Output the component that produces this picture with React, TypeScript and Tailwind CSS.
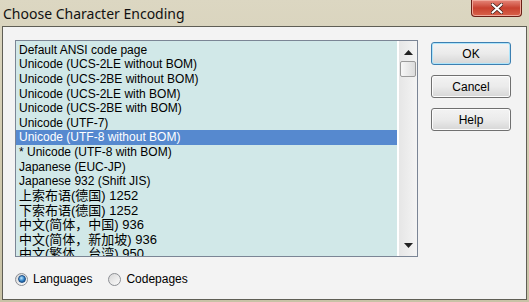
import * as React from "react"

const encodings = [
  "Default ANSI code page",
  "Unicode (UCS-2LE without BOM)",
  "Unicode (UCS-2BE without BOM)",
  "Unicode (UCS-2LE with BOM)",
  "Unicode (UCS-2BE with BOM)",
  "Unicode (UTF-7)",
  "Unicode (UTF-8 without BOM)",
  "* Unicode (UTF-8 with BOM)",
  "Japanese (EUC-JP)",
  "Japanese 932 (Shift JIS)",
  "上索布语(德国) 1252",
  "下索布语(德国) 1252",
  "中文(简体，中国) 936",
  "中文(简体，新加坡) 936",
  "中文(繁体，台湾) 950",
]

function Radio({ label, checked }: { label: string; checked?: boolean }) {
  return (
    <label className="flex items-center gap-[5px]">
      <span className="flex h-[13px] w-[13px] items-center justify-center rounded-full border border-[#8c8f94] bg-gradient-to-br from-[#d8d8d8] to-[#fbfbfb]">
        {checked && (
          <span className="h-[8px] w-[8px] rounded-full border border-[#1f4f86] bg-[radial-gradient(circle_at_40%_35%,#bfe8ff,#2d7fc5_55%,#123e73)]" />
        )}
      </span>
      <span>{label}</span>
    </label>
  )
}

function DialogButton({ label, primary }: { label: string; primary?: boolean }) {
  return (
    <button
      className={
        "h-[23px] w-[80px] rounded-[3px] border bg-gradient-to-b from-[#f3f3f3] via-[#ebebeb] to-[#d6d6d6] text-[12px] text-black " +
        (primary
          ? "border-[#3c7fb1] shadow-[inset_0_0_0_1px_#aee4fa]"
          : "border-[#707070] shadow-[inset_0_0_0_1px_#fcfcfc]")
      }
    >
      {label}
    </button>
  )
}

export default function App() {
  const [selected, setSelected] = React.useState(6)

  return (
    <div
      className="relative h-[302px] w-[529px] overflow-hidden bg-gradient-to-b from-[#dcd7c2] via-[#d2cbb0] to-[#c8c2a6] text-black"
      style={{ fontFamily: '"Liberation Sans", "Noto Sans CJK SC", sans-serif' }}
    >
      {/* title bar */}
      <div className="flex h-[26px] items-center pl-[3px] text-[14px] text-[#111]" style={{ fontFamily: '"Noto Sans", sans-serif' }}>
        Choose Character Encoding
      </div>
      <div className="absolute right-[7px] top-0 flex h-[17px] w-[51px] items-center justify-center rounded-b-[4px] border border-t-0 border-[#6b1f16] bg-gradient-to-b from-[#e5867a] via-[#c8402f] to-[#d8624a] shadow-[inset_0_0_0_1px_#f0a89b]">
        <svg width="12" height="11" viewBox="0 0 12 11">
          <path d="M1.5 1.5 L10.5 9.5 M10.5 1.5 L1.5 9.5" stroke="#3c1a14" strokeWidth="3.6" strokeLinecap="round" />
          <path d="M1.5 1.5 L10.5 9.5 M10.5 1.5 L1.5 9.5" stroke="#ffffff" strokeWidth="2.2" strokeLinecap="round" />
        </svg>
      </div>

      {/* client area */}
      <div className="mx-[2px] flex h-[274px] border border-[#5f5e55] bg-[#f3f3f3] pl-[12px] pt-[13px]">
        <div className="flex flex-col">
          <div className="flex h-[217px] w-[403px] border border-[#7b8595] bg-[#d1e8e8] text-[12px]">
            <div className="flex-1 overflow-hidden pt-[1.5px]">
              {encodings.map((enc, i) => (
                <div
                  key={enc}
                  onClick={() => setSelected(i)}
                  className={
                    "flex h-[14.6px] items-center whitespace-nowrap pl-[3px] " +
                    (i >= 10 ? "text-[13px] " : "") +
                    (i === selected ? "bg-[#5689cf] text-white" : "")
                  }
                >
                  {enc}
                </div>
              ))}
            </div>
            <div className="flex w-[20px] flex-col items-center border-l-2 border-white bg-gradient-to-r from-[#e6e6e6] to-[#f4f4f4]">
              <svg className="mt-[9px]" width="9" height="5" viewBox="0 0 9 5">
                <path d="M4.5 0 L9 5 L0 5 Z" fill="#222" />
              </svg>
              <div className="mt-[6px] h-[16px] w-[16px] rounded-[2px] border border-[#9a9a9a] bg-gradient-to-r from-[#f7f7f7] to-[#dcdcdc]" />
              <div className="flex-1" />
              <svg className="mb-[8px]" width="9" height="5" viewBox="0 0 9 5">
                <path d="M0 0 L9 0 L4.5 5 Z" fill="#222" />
              </svg>
            </div>
          </div>
          <div className="mt-[13px] flex items-center gap-[16px] text-[12px]">
            <Radio label="Languages" checked />
            <Radio label="Codepages" />
          </div>
        </div>
        <div className="ml-[13px] flex flex-col gap-[10px] pt-[2px]">
          <DialogButton label="OK" primary />
          <DialogButton label="Cancel" />
          <DialogButton label="Help" />
        </div>
      </div>
    </div>
  )
}
